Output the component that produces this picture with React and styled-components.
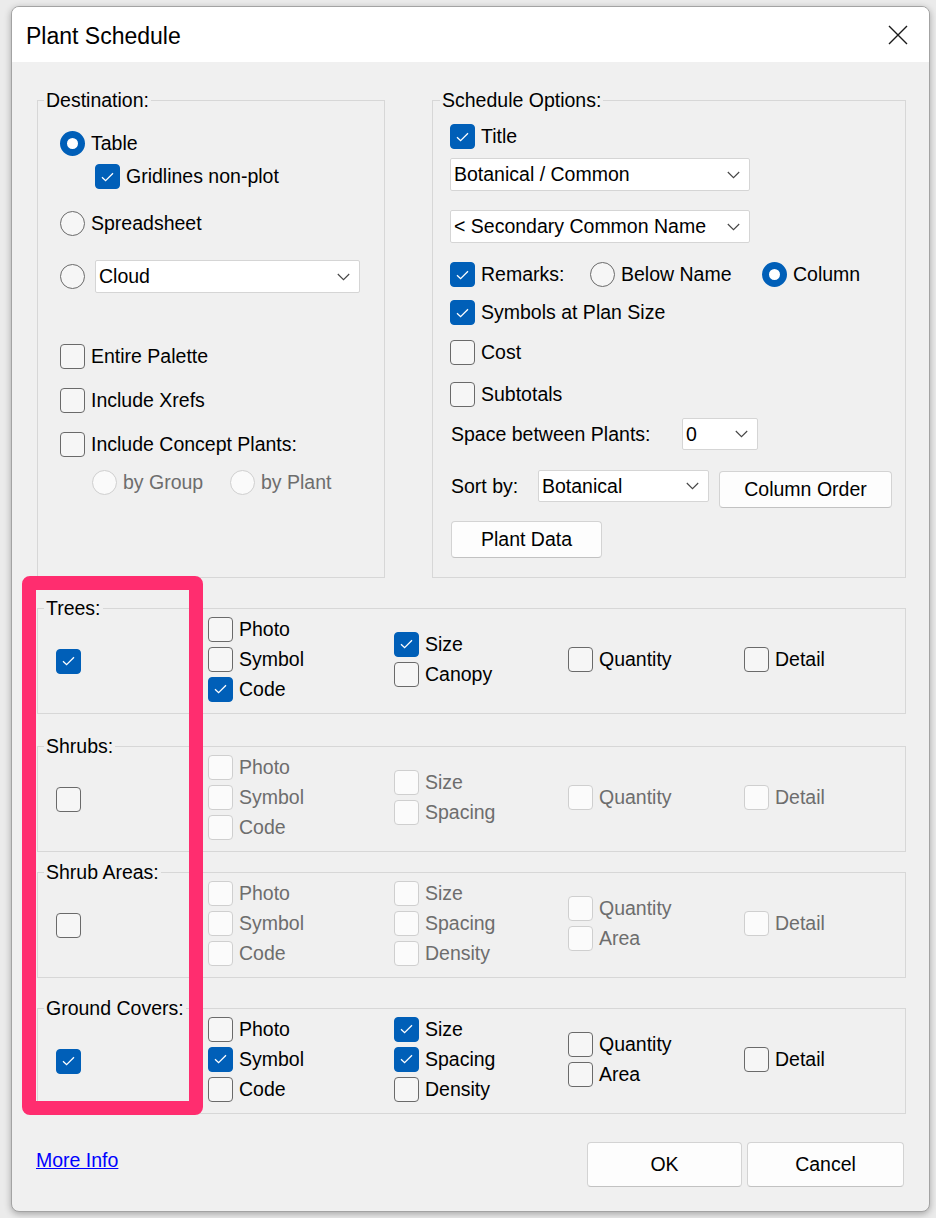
import React from 'react';
import styled, { createGlobalStyle } from 'styled-components';

const GlobalStyle = createGlobalStyle`
  html, body {
    margin: 0;
    padding: 0;
  }
  body {
    background: #ebebeb;
    font-family: "Liberation Sans", Arial, sans-serif;
    color: #000;
  }
`;

const BLUE = '#005fb8';

const Page = styled.div`
  padding: 6px 6px 6px 11px;
`;

const Window = styled.div`
  width: 919px;
  height: 1206px;
  box-sizing: border-box;
  border: 1px solid #a3a3a3;
  border-radius: 8px;
  overflow: hidden;
  background: #f0f0f0;
  box-shadow: 0 2px 7px rgba(0, 0, 0, 0.3);
  display: flex;
  flex-direction: column;
`;

const TitleBar = styled.div`
  flex: none;
  height: 55px;
  background: #fff;
  display: flex;
  align-items: center;
  justify-content: space-between;
  padding: 0 21px 0 14px;
`;

const Title = styled.div`
  font-size: 23px;
  line-height: 28px;
  margin-top: 2px;
`;

const Body = styled.div`
  flex: 1;
  padding: 26px 23px 0 25px;
  display: flex;
  flex-direction: column;
`;

const TopSection = styled.div`
  display: flex;
  gap: 47px;
`;

const GroupBox = styled.fieldset`
  margin: ${({ $mt }) => $mt || 0}px 0 0;
  padding: 0;
  min-width: 0;
  border: 1px solid #d7d7d7;
  box-sizing: border-box;
  width: ${({ $w }) => ($w ? `${$w}px` : 'auto')};
  flex: ${({ $w }) => ($w ? 'none' : '1')};
`;

const Legend = styled.legend`
  margin-left: ${({ $indent }) => $indent ?? 6}px;
  padding: 0 2px;
  font-size: 19.5px;
  line-height: 24px;
`;

const Pane = styled.div`
  height: 465px;
  box-sizing: border-box;
  padding-left: ${({ $pl }) => $pl}px;
  display: flex;
  flex-direction: column;
  align-items: flex-start;
`;

const Row = styled.div`
  display: flex;
  align-items: ${({ $align }) => $align || 'center'};
  margin-top: ${({ $mt }) => $mt || 0}px;
  margin-left: ${({ $indent }) => $indent || 0}px;
  gap: ${({ $gap }) => $gap || 0}px;
`;

const OptionWrap = styled.label`
  display: flex;
  align-items: center;
  gap: 6px;
  height: 25px;
  width: ${({ $w }) => ($w ? `${$w}px` : 'auto')};
  flex: none;
`;

const OptionText = styled.span`
  font-size: 19.5px;
  line-height: 25px;
  white-space: nowrap;
  color: ${({ $disabled }) => ($disabled ? '#6d6d6d' : '#000')};
`;

const CheckMark = styled.span`
  flex: none;
  width: 25px;
  height: 25px;
  box-sizing: border-box;
  border-radius: 4px;
  border: 1.5px solid
    ${({ $checked, $disabled }) => ($checked ? BLUE : $disabled ? '#cfcfcf' : '#6a6a6a')};
  background: ${({ $checked, $disabled }) => ($checked ? BLUE : $disabled ? '#fbfbfb' : '#f6f6f6')};
  display: flex;
  align-items: center;
  justify-content: center;
`;

const RadioMark = styled.span`
  flex: none;
  width: 25px;
  height: 25px;
  box-sizing: border-box;
  border-radius: 50%;
  border: ${({ $checked, $disabled }) =>
    $checked ? `7.5px solid ${BLUE}` : `1.5px solid ${$disabled ? '#cfcfcf' : '#6a6a6a'}`};
  background: ${({ $checked, $disabled }) => ($checked ? '#fff' : $disabled ? '#fafafa' : '#f6f6f6')};
`;

const Tick = () => (
  <svg width="13" height="10" viewBox="0 0 13 10">
    <path d="M1 5.2 L4.6 8.6 L12 1.2" fill="none" stroke="#fff" strokeWidth="1.3" />
  </svg>
);

const Option = ({ radio, checked, disabled, w, children }) => (
  <OptionWrap $w={w}>
    {radio ? (
      <RadioMark $checked={checked} $disabled={disabled} />
    ) : (
      <CheckMark $checked={checked} $disabled={disabled}>
        {checked && <Tick />}
      </CheckMark>
    )}
    {children && <OptionText $disabled={disabled}>{children}</OptionText>}
  </OptionWrap>
);

const SelectBox = styled.div`
  flex: none;
  width: ${({ $w }) => $w}px;
  height: ${({ $h }) => $h || 33}px;
  box-sizing: border-box;
  background: #fff;
  border: 1px solid #d5d5d5;
  border-radius: 2px;
  display: flex;
  align-items: center;
  justify-content: space-between;
  padding: 0 9px 0 3px;
  font-size: 19.5px;
  white-space: nowrap;
`;

const Chevron = () => (
  <svg width="13" height="8" viewBox="0 0 13 8">
    <path d="M0.8 1 L6.5 6.7 L12.2 1" fill="none" stroke="#444" strokeWidth="1.1" />
  </svg>
);

const Select = ({ w, h, value }) => (
  <SelectBox $w={w} $h={h}>
    <span>{value}</span>
    <Chevron />
  </SelectBox>
);

const FieldLabel = styled.span`
  flex: none;
  width: ${({ $w }) => $w}px;
  font-size: 19.5px;
  line-height: 32px;
  white-space: nowrap;
`;

const Button = styled.button`
  flex: none;
  width: ${({ $w }) => $w}px;
  height: ${({ $h }) => $h}px;
  margin-top: ${({ $mt }) => $mt || 0}px;
  margin-left: ${({ $ml }) => $ml || 0}px;
  box-sizing: border-box;
  background: #fdfdfd;
  border: 1px solid #d3d3d3;
  border-bottom-color: #c2c2c2;
  border-radius: 4px;
  font-family: inherit;
  font-size: 19.5px;
  color: #000;
  padding: 0;
`;

const CategoryArea = styled.div`
  position: relative;
  margin-top: 18px;
`;

const Highlight = styled.div`
  position: absolute;
  left: -15px;
  top: -20px;
  width: 181px;
  height: 539px;
  box-sizing: border-box;
  border: 14px solid #ff2d6f;
  border-radius: 8px;
  pointer-events: none;
  z-index: 1;
`;

const CategoryGrid = styled.div`
  height: 93px;
  box-sizing: border-box;
  padding: 0 0 15px 18px;
  display: grid;
  grid-template-columns: 152px 186px 174px 176px 1fr;
  grid-template-rows: 78px;
  align-items: unsafe center;
`;

const MasterCell = styled.div`
  margin-top: 4px;
`;

const OptionColumn = styled.div`
  display: flex;
  flex-direction: column;
  gap: 5px;
`;

const Footer = styled.div`
  margin-top: 28px;
  display: flex;
  justify-content: space-between;
  align-items: flex-start;
`;

const MoreInfo = styled.a`
  margin: 6px 0 0 -1px;
  color: #0000ff;
  text-decoration: underline;
  font-size: 19.5px;
  line-height: 24px;
`;

const ButtonGroup = styled.div`
  display: flex;
  gap: 5px;
  margin-right: 2px;
`;

const categories = [
  {
    name: 'Trees:',
    checked: true,
    mt: 0,
    cols: [
      [['Photo'], ['Symbol'], ['Code', true]],
      [['Size', true], ['Canopy']],
      [['Quantity']],
      [['Detail']],
    ],
  },
  {
    name: 'Shrubs:',
    disabled: true,
    mt: 20,
    cols: [
      [['Photo'], ['Symbol'], ['Code']],
      [['Size'], ['Spacing']],
      [['Quantity']],
      [['Detail']],
    ],
  },
  {
    name: 'Shrub Areas:',
    disabled: true,
    mt: 8,
    cols: [
      [['Photo'], ['Symbol'], ['Code']],
      [['Size'], ['Spacing'], ['Density']],
      [['Quantity'], ['Area']],
      [['Detail']],
    ],
  },
  {
    name: 'Ground Covers:',
    checked: true,
    mt: 18,
    cols: [
      [['Photo'], ['Symbol', true], ['Code']],
      [['Size', true], ['Spacing', true], ['Density']],
      [['Quantity'], ['Area']],
      [['Detail']],
    ],
  },
];

const Category = ({ cat }) => (
  <GroupBox $mt={cat.mt}>
    <Legend>{cat.name}</Legend>
    <CategoryGrid>
      <MasterCell>
        <Option checked={cat.checked} />
      </MasterCell>
      {cat.cols.map((col, i) => (
        <OptionColumn key={i}>
          {col.map(([label, on]) => (
            <Option key={label} checked={on} disabled={cat.disabled}>
              {label}
            </Option>
          ))}
        </OptionColumn>
      ))}
    </CategoryGrid>
  </GroupBox>
);

export default function App() {
  return (
    <>
      <GlobalStyle />
      <Page>
        <Window>
          <TitleBar>
            <Title>Plant Schedule</Title>
            <svg width="20" height="20" viewBox="0 0 20 20">
              <path d="M1 1 L19 19 M19 1 L1 19" stroke="#1a1a1a" strokeWidth="1.4" />
            </svg>
          </TitleBar>
          <Body>
            <TopSection>
              <GroupBox $w={348}>
                <Legend>Destination:</Legend>
                <Pane $pl={22}>
                  <Row $mt={19}>
                    <Option radio checked>Table</Option>
                  </Row>
                  <Row $mt={8} $indent={35}>
                    <Option checked>Gridlines non-plot</Option>
                  </Row>
                  <Row $mt={22}>
                    <Option radio>Spreadsheet</Option>
                  </Row>
                  <Row $mt={24} $gap={10}>
                    <Option radio />
                    <Select w={265} value="Cloud" />
                  </Row>
                  <Row $mt={51}>
                    <Option>Entire Palette</Option>
                  </Row>
                  <Row $mt={19}>
                    <Option>Include Xrefs</Option>
                  </Row>
                  <Row $mt={19}>
                    <Option>Include Concept Plants:</Option>
                  </Row>
                  <Row $mt={13} $indent={32}>
                    <Option radio disabled w={138}>by Group</Option>
                    <Option radio disabled>by Plant</Option>
                  </Row>
                </Pane>
              </GroupBox>
              <GroupBox>
                <Legend $indent={7}>Schedule Options:</Legend>
                <Pane $pl={17}>
                  <Row $mt={12}>
                    <Option checked>Title</Option>
                  </Row>
                  <Row $mt={9}>
                    <Select w={300} value="Botanical / Common" />
                  </Row>
                  <Row $mt={19}>
                    <Select w={300} value="< Secondary Common Name" />
                  </Row>
                  <Row $mt={19}>
                    <Option checked w={140}>Remarks:</Option>
                    <Option radio w={172}>Below Name</Option>
                    <Option radio checked>Column</Option>
                  </Row>
                  <Row $mt={13}>
                    <Option checked>Symbols at Plan Size</Option>
                  </Row>
                  <Row $mt={15}>
                    <Option>Cost</Option>
                  </Row>
                  <Row $mt={17}>
                    <Option>Subtotals</Option>
                  </Row>
                  <Row $mt={11} $indent={1}>
                    <FieldLabel $w={231}>Space between Plants:</FieldLabel>
                    <Select w={76} h={32} value="0" />
                  </Row>
                  <Row $mt={20} $indent={1} $align="flex-start">
                    <FieldLabel $w={87}>Sort by:</FieldLabel>
                    <Select w={171} h={32} value="Botanical" />
                    <Button $w={173} $h={37} $mt={1} $ml={10}>
                      Column Order
                    </Button>
                  </Row>
                  <Row $mt={13} $indent={1}>
                    <Button $w={151} $h={37}>Plant Data</Button>
                  </Row>
                </Pane>
              </GroupBox>
            </TopSection>

            <CategoryArea>
              {categories.map((cat) => (
                <Category key={cat.name} cat={cat} />
              ))}
              <Highlight />
            </CategoryArea>

            <Footer>
              <MoreInfo href="#">More Info</MoreInfo>
              <ButtonGroup>
                <Button $w={155} $h={45}>OK</Button>
                <Button $w={157} $h={45}>Cancel</Button>
              </ButtonGroup>
            </Footer>
          </Body>
        </Window>
      </Page>
    </>
  );
}
